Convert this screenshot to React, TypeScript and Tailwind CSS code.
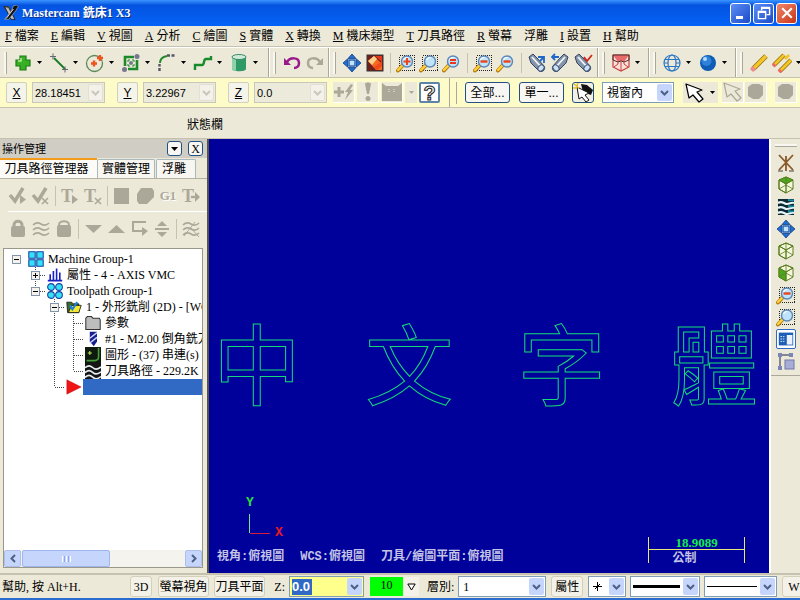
import type { ReactNode } from "react";
import clsx from "clsx";

const GRAY = "#aca899";

function Icon({ children, size = "w-5 h-5" }: { children: ReactNode; size?: string }) {
  return (
    <svg viewBox="0 0 20 20" className={clsx(size, "shrink-0")} fill="none" aria-hidden="true">
      {children}
    </svg>
  );
}

function Tool({ label, children }: { label: string; children: ReactNode }) {
  return (
    <button aria-label={label} className="w-5 h-5 shrink-0 flex items-center justify-center">
      <Icon>{children}</Icon>
    </button>
  );
}

function Caret({ label }: { label: string }) {
  return (
    <button aria-label={label} className="w-3 h-5 shrink-0 flex items-center justify-center">
      <svg viewBox="0 0 5 3" className="w-[5px] h-[3px]">
        <path d="M0 0h5L2.5 3z" fill="#000" />
      </svg>
    </button>
  );
}

function DropTool({ label, children }: { label: string; children: ReactNode }) {
  return (
    <div className="flex shrink-0 mr-px">
      <Tool label={label}>{children}</Tool>
      <Caret label={`${label} options`} />
    </div>
  );
}

function Section({ children, className }: { children: ReactNode; className?: string }) {
  return (
    <div className={clsx("flex items-center gap-[3px] pl-1 shrink-0 border-r border-[#aca899] shadow-[1px_0_0_#fff]", className)}>
      <div className="w-[3px] h-[22px] mr-[3px] shrink-0 border-r border-[#aca899] bg-[#f8f7f1]" />
      {children}
    </div>
  );
}

function Divider({ className = "w-[5px]" }: { className?: string }) {
  return (
    <div className={clsx("h-5 flex justify-center shrink-0", className)}>
      <div className="w-px h-full bg-[#c5c2b0]" />
    </div>
  );
}

function Chevron({ muted = false }: { muted?: boolean }) {
  return (
    <svg viewBox="0 0 9 6" className="w-[9px] h-[6px]" fill="none">
      <path d="M1 1l3.5 3.5L8 1" stroke={muted ? "#c9c7ba" : "#4d6185"} strokeWidth="2" />
    </svg>
  );
}

function ArrowBox({ muted = false }: { muted?: boolean }) {
  return (
    <span
      className={clsx(
        "w-[15px] flex items-center justify-center rounded-xs pointer-events-none shrink-0",
        muted ? "bg-[#f3f1e9] border border-[#e3e0d3]" : "bg-[#c6d5fb]"
      )}
    >
      <Chevron muted={muted} />
    </span>
  );
}

function CoordField({ axis, value }: { axis: string; value: string }) {
  return (
    <div className="flex items-center shrink-0 gap-[5px] mr-3">
      <button aria-label={`Lock ${axis}`} className="w-[21px] h-[21px] rounded-xs border border-[#d2cfbb] bg-[#f5f4ea] underline leading-none">
        {axis}
      </button>
      <div className="w-[73px] h-[21px] flex border border-[#c9c7ba] bg-[#eceadb] p-px">
        <input aria-label={axis} defaultValue={value} className="w-0 grow bg-transparent pl-px text-[11px] outline-none" />
        <button aria-label={`${axis} history`} className="flex">
          <ArrowBox muted />
        </button>
      </div>
    </div>
  );
}

function Dropdown({ label, value, className, children }: { label: string; value?: string; className?: string; children?: ReactNode }) {
  return (
    <div className={clsx("relative border border-[#7f9db9] bg-white p-px shrink-0", className)}>
      <select aria-label={label} className="appearance-none w-full h-full pl-[3px] pr-4 bg-transparent outline-none">
        <option>{value}</option>
      </select>
      {children}
      <div className="absolute inset-y-px right-px flex pointer-events-none">
        <ArrowBox />
      </div>
    </div>
  );
}

/* ---------- drawing pieces shared between toolbars ---------- */

function Magnifier({ mark, box = false }: { mark?: "plus" | "minus" | "equal"; box?: boolean }) {
  return (
    <>
      {box && <rect x="3.5" y="2.5" width="15" height="15" stroke="#222" strokeDasharray="1 1" shapeRendering="crispEdges" />}
      <path d="M7 12L2 17.5" stroke="#b57a10" strokeWidth="4" strokeLinecap="round" />
      <path d="M7 12L2 17" stroke="#ffd23c" strokeWidth="2.4" strokeLinecap="round" />
      <circle cx="11" cy="8.500" r="5.500" fill="#bfe3fb" stroke="#5b87b8" strokeWidth="1.4" />
      <path d="M7.500 7a4 4 0 0 1 4-2.500" stroke="#fff" strokeWidth="1.2" />
      {mark === "plus" && <path d="M11 5v7M7.500 8.500h7" stroke="#e8451c" strokeWidth="2" />}
      {mark === "minus" && <path d="M7.500 8.500h7" stroke="#e8451c" strokeWidth="2.4" />}
      {mark === "equal" && <path d="M8 7h6M8 10h6" stroke="#e8351c" strokeWidth="1.8" />}
    </>
  );
}

function FitArrows() {
  return (
    <>
      <path d="M10 1l4 4.500H6zM10 19l4-4.500H6zM1 10l4.500-4v8zM19 10l-4.500-4v8z" fill="#1f6fd0" stroke="#123f8c" strokeWidth=".8" />
      <rect x="7" y="7" width="6" height="6" fill="#c4e4fc" stroke="#1c5cb5" strokeWidth="1.400" />
    </>
  );
}

function Flashlight({ color, mark }: { color: string; mark: string }) {
  return (
    <>
      <path d="M2 4l4-3 4 4 7 8c2 3-1 7-5 5L4 10z" fill="#8494aa" stroke="#36455d" />
      <path d="M5 4l9 10" stroke="#f2f6fb" strokeWidth="1.800" />
      <ellipse cx="14" cy="15" rx="3.400" ry="2.600" transform="rotate(-45 14 15)" fill="#cfe2f5" stroke="#3c5478" />
      <path d={mark} stroke={color} strokeWidth="1.800" />
    </>
  );
}

function WireCube({ top = "none", left = "none" }: { top?: string; left?: string }) {
  return (
    <g stroke="#5a7d1e" strokeLinejoin="round">
      <path d="M10 2l7 3v9l-7 4-7-4V5z" fill="#f3f6dc" />
      <path d="M10 2l7 3-7 4-7-4z" fill={top} />
      <path d="M3 5l7 4v9l-7-4z" fill={left} />
      <path d="M10 9v9M10 9l7-4M10 2v7M3 14l7-4 7 4" strokeWidth=".8" />
    </g>
  );
}

function Waves() {
  return (
    <path
      d="M2 6c3-3 5-3 8-1s5 2 8-1M2 11c3-3 5-3 8-1s5 2 8-1M2 16c3-3 5-3 8-1s5 2 8-1"
      stroke={GRAY}
      strokeWidth="1.600"
    />
  );
}

function Pointer({ fill = "#fff", stroke = "#000" }: { fill?: string; stroke?: string }) {
  return <path d="M1 1l3 14 4-3 6 7 4-3-6-7 5-2z" fill={fill} stroke={stroke} strokeWidth="1.200" strokeLinejoin="round" />;
}

function Blob() {
  return <path d="M2 5l4-3h7l4 2v9l-4 4H7l-5-3z" fill={GRAY} />;
}

function LetterT() {
  return (
    <text x="1" y="16" fontSize="18" fontWeight="bold" fill={GRAY} fontFamily="Liberation Serif, serif">T</text>
  );
}

/* ---------- window parts ---------- */

function TitleBar() {
  return (
    <header className="h-[26px] shrink-0 flex items-center px-[3px] bg-linear-to-b from-[#3b93ff] via-[#0453e0] via-20% to-[#0463f7]">
      <Icon size="w-4 h-4">
        <path d="M1 2h6l3 5-3 3z" fill="#d9d9d9" stroke="#222" />
        <path d="M2 2l5 1 8 15h-5z" fill="#bcbcbc" stroke="#111" />
        <path d="M13 1l4-1 2 2-3 5-9 11H2l9-11z" fill="#111" stroke="#ddd" strokeWidth=".6" />
        <path d="M4 17l9-12" stroke="#fff" />
      </Icon>
      <h1 className="ml-[3px] font-bold text-white grow [text-shadow:1px_1px_0_#0a2f8c]">Mastercam 銑床1 X3</h1>
      <div className="flex gap-[2px]">
        <button aria-label="Minimize" className="w-[21px] h-[21px] rounded-[3px] border border-white bg-linear-to-br from-[#5c8df5] to-[#1c49c9] flex items-end p-1">
          <span className="w-[7px] h-[3px] bg-white ml-px" />
        </button>
        <button aria-label="Restore" className="w-[21px] h-[21px] rounded-[3px] border border-white bg-linear-to-br from-[#5c8df5] to-[#1c49c9] flex items-center justify-center">
          <Icon size="w-4 h-4">
            <path d="M7 7V3h10v9h-4M7 4h10" stroke="#fff" strokeWidth="1.800" />
            <path d="M3 8h9v9H3zM3 9h9" stroke="#fff" strokeWidth="1.800" />
          </Icon>
        </button>
        <button aria-label="Close" className="w-[21px] h-[21px] rounded-[3px] border border-white bg-linear-to-br from-[#ee8667] to-[#c9300c] flex items-center justify-center">
          <Icon size="w-4 h-4">
            <path d="M4 4l12 12M16 4L4 16" stroke="#fff" strokeWidth="2.600" />
          </Icon>
        </button>
      </div>
    </header>
  );
}

const menus = [
  ["F", "檔案"], ["E", "編輯"], ["V", "視圖"], ["A", "分析"], ["C", "繪圖"], ["S", "實體"], ["X", "轉換"],
  ["M", "機床類型"], ["T", "刀具路徑"], ["R", "螢幕"], ["", "浮雕"], ["I", "設置"], ["H", "幫助"],
];

function MenuBar() {
  return (
    <nav className="h-[21px] shrink-0 flex items-center gap-3 pl-[5px] border-b border-[#c5c2b0] overflow-hidden">
      {menus.map(([key, text]) => (
        <button key={text} className="flex gap-[3px] shrink-0 whitespace-nowrap">
          {key && <span className="underline">{key}</span>}
          <span>{text}</span>
        </button>
      ))}
    </nav>
  );
}

function MainToolbar() {
  return (
    <div className="h-[31px] shrink-0 flex border-b border-[#c5c2b0] border-t border-t-white overflow-hidden">
      <Section className="w-[269px]">
        <DropTool label="Point">
          <path d="M7 3h6v4h4v6h-4v4H7v-4H3V7h4z" fill="#37b024" stroke="#207c17" strokeWidth="1.200" />
          <path d="M8 5v3H5" stroke="#b6ec9a" strokeWidth="1.500" />
        </DropTool>
        <DropTool label="Line">
          <path d="M5 5l11 11" stroke="#177a24" strokeWidth="1.800" />
          <path d="M1 3.500h6M4 .5v6M13 16.500h6M16 13.500v6" stroke="#667" />
        </DropTool>
        <DropTool label="Arc">
          <circle cx="9.500" cy="10.500" r="8" stroke="#5b8a5b" strokeWidth="1.300" />
          <path d="M9 7.500v6M6 10.500h6M15 2v6M12 5h6" stroke="#f0531c" strokeWidth="2.400" />
        </DropTool>
        <DropTool label="Rectangle">
          <path d="M13 4H4v9M7 16h9V7" stroke="#1c8a2b" strokeWidth="2.600" />
          <path d="M7 9V7h2M11 7h2v2M13 11v2h-2M9 13H7v-2" stroke="#1c8a2b" />
          <circle cx="10" cy="10" r="2" fill="#777790" />
          <circle cx="16" cy="3.500" r="2.500" fill="#777790" />
          <circle cx="3.500" cy="16.500" r="2.500" fill="#777790" />
        </DropTool>
        <DropTool label="Fillet">
          <path d="M2.500 18V11" stroke="#556" strokeWidth="2.400" strokeDasharray="3 1.500" />
          <path d="M3 10c0-4 2-6 7-7" stroke="#1c8a2b" strokeWidth="2" />
          <path d="M10 2.500h8" stroke="#556" strokeWidth="2.400" strokeDasharray="3 1.500" />
        </DropTool>
        <DropTool label="Spline">
          <path d="M2 17v-5h7c3 0 1-6 4-6h5V3" stroke="#178a2a" strokeWidth="2.400" />
        </DropTool>
        <DropTool label="Cylinder">
          <path d="M3 4v12c0 3 14 3 14 0V4z" fill="#2f9a66" />
          <path d="M3 4v12c0 1 2 2 4 2V5z" fill="#8fd0ae" />
          <ellipse cx="10" cy="4" rx="7" ry="2.500" fill="#cfe9da" stroke="#3a8c64" />
        </DropTool>
      </Section>
      <Section className="w-[60px]">
        <Tool label="Undo">
          <path d="M5 9c3-5 12-5 12 1 0 3-2 5-5 5" stroke="#9a1a8e" strokeWidth="2.500" />
          <path d="M2 5v7h7z" fill="#9a1a8e" />
        </Tool>
        <Tool label="Redo">
          <path d="M15 9C12 4 3 4 3 10c0 3 2 5 5 5" stroke={GRAY} strokeWidth="2.500" />
          <path d="M18 5v7h-7z" fill={GRAY} />
        </Tool>
      </Section>
      <Section className="w-[269px]">
        <Tool label="Fit">
          <FitArrows />
        </Tool>
        <Tool label="Repaint">
          <rect x="2" y="2" width="16" height="16" fill="#70201c" stroke="#333" />
          <path d="M10 3h7v6z" fill="#e03a1c" />
          <path d="M3 8l6-5 8 8v6h-6z" fill="#f56a20" />
          <path d="M3 8l6-5 3 3-5 6z" fill="#ffd08a" />
          <path d="M9 14l8-6v5l-5 4z" fill="#f0481c" />
        </Tool>
        <Divider />
        <Tool label="Zoom window"><Magnifier mark="plus" box /></Tool>
        <Tool label="Zoom target"><Magnifier box /></Tool>
        <Tool label="Zoom selected"><Magnifier mark="equal" /></Tool>
        <Divider />
        <Tool label="Zoom previous"><Magnifier mark="minus" box /></Tool>
        <Tool label="Zoom out"><Magnifier mark="minus" /></Tool>
        <Divider />
        <Tool label="Dynamic spin"><Flashlight color="#1f66c9" mark="M11 4h6v6M17 4l-4 4" /></Tool>
        <Tool label="Previous view">
          <path d="M18 4l-4-3-4 4-7 8c-2 3 1 7 5 5l8-8z" fill="#8494aa" stroke="#36455d" />
          <path d="M15 4l-9 10" stroke="#f2f6fb" strokeWidth="1.800" />
          <ellipse cx="6" cy="15" rx="3.400" ry="2.600" transform="rotate(45 6 15)" fill="#cfe2f5" stroke="#3c5478" />
          <path d="M9 4H2M5 1L2 4l3 3" stroke="#1f66c9" strokeWidth="1.800" />
        </Tool>
        <Tool label="Named view"><Flashlight color="#d3261c" mark="M11 4l3 4 5-6" /></Tool>
      </Section>
      <Section className="w-[51px]">
        <DropTool label="Graphics view">
          <path d="M2 2h16v12l-8 4-8-4z" fill="#fbe0da" stroke="#c8403c" strokeWidth="1.200" />
          <path d="M2 2h16l-5 7-3-1-3 1z" fill="#e86a6a" />
          <path d="M2 2h16v5l-5 2-3-1-3 1-5-2z" stroke="#4a3030" />
          <path d="M10 9v9M3 14l4-3v-2M17 14l-4-3v-2" stroke="#c8403c" />
        </DropTool>
      </Section>
      <Section className="w-[87px]">
        <DropTool label="Wireframe">
          <g stroke="#2a76c4" strokeWidth="1.200">
            <circle cx="10" cy="10" r="8" />
            <ellipse cx="10" cy="10" rx="4" ry="8" />
            <path d="M2 10h4M14 10h4M3 6.500h14M3 13.500h14" />
          </g>
        </DropTool>
        <DropTool label="Shaded">
          <circle cx="10" cy="10" r="8" fill="#0f5cb4" />
          <circle cx="8.500" cy="8" r="5" fill="#2f82d8" />
          <circle cx="7" cy="6" r="2" fill="#b4dcfb" />
        </DropTool>
      </Section>
      <Section className="w-[90px] border-r-0">
        <Tool label="Delete">
          <path d="M4 16L17 3" stroke="#947012" strokeWidth="5" />
          <path d="M5 15L17 3" stroke="#f5c526" strokeWidth="3.400" />
          <path d="M2.500 17.500l3-3" stroke="#ee8c8c" strokeWidth="4.500" />
        </Tool>
        <DropTool label="Delete duplicates">
          <path d="M2 12L12 2M8 18L19 7" stroke="#947012" strokeWidth="4.400" />
          <path d="M2 12L12 2M8 18L19 7M13 6l4-4" stroke="#f5c526" strokeWidth="2.800" />
          <path d="M1 13l2-2M7 19l2-2" stroke="#e66" strokeWidth="4" />
        </DropTool>
      </Section>
    </div>
  );
}

function FlatButton({ label, children }: { label: string; children: ReactNode }) {
  return (
    <button aria-label={label} className="w-[22px] h-[21px] shrink-0 bg-[#ece9d8] border-r border-b border-white flex items-center justify-center">
      <Icon>{children}</Icon>
    </button>
  );
}

function RibbonBar() {
  return (
    <div className="h-[30px] shrink-0 flex items-center bg-[#fdfcc9] border-b border-[#c5c2b0] overflow-hidden font-['Liberation_Sans','Noto_Sans_CJK_TC',sans-serif]">
      <div className="w-[450px] h-full pl-[6px] shrink-0 flex items-center border-r border-[#aca899]">
        <CoordField axis="X" value="28.18451" />
        <CoordField axis="Y" value="3.22967" />
        <CoordField axis="Z" value="0.0" />
        <div className="flex gap-[2px] -ml-[6px]">
          <FlatButton label="Fast point">
            <path d="M5 5v10M0 10h10" stroke={GRAY} strokeWidth="3" />
            <path d="M17 2l-6 8h3l-3 8 8-10h-3l3-5z" fill={GRAY} />
          </FlatButton>
          <FlatButton label="AutoCursor override">
            <path d="M7 2c0-2 6-2 6 0l-2 10H9z" fill={GRAY} />
            <circle cx="10" cy="16.500" r="2.500" fill={GRAY} />
          </FlatButton>
          <FlatButton label="AutoCursor settings">
            <path d="M0 1l4 3h12l4-3v18H0z" fill={GRAY} />
            <path d="M7 7v3M12 7v3" stroke="#ece9d8" strokeDasharray="1 1" />
          </FlatButton>
          <button aria-label="AutoCursor list" className="w-3 h-[21px] bg-[#ece9d8] flex items-center justify-center">
            <svg viewBox="0 0 5 3" className="w-[5px] h-[3px]"><path d="M0 0h5L2.500 3z" fill={GRAY} /></svg>
          </button>
          <button className="w-[21px] h-[21px] rounded-xs border-2 border-[#5f82a8] bg-white text-[20px] leading-none font-bold text-[#e9e9e9] [-webkit-text-stroke:1px_#222] flex items-center justify-center">?</button>
        </div>
      </div>
      <div className="w-[3px] h-[22px] ml-1 mr-2 shrink-0 border-r border-[#aca899]" />
      <button className="w-[45px] h-[21px] shrink-0 rounded-[3px] border border-[#24507f] bg-[#f7f6f2]">全部...</button>
      <button className="w-[45px] h-[21px] ml-[9px] shrink-0 rounded-[3px] border border-[#24507f] bg-[#f7f6f2]">單一...</button>
      <button aria-label="Select last" className="w-[22px] h-[21px] ml-2 shrink-0 rounded-[3px] border border-[#24507f] bg-[#f2f0e6] flex items-center justify-center">
        <Icon>
          <path d="M8 1l6 1 6 5-2 5-8-3z" fill="#111" />
          <path d="M4 4l2 12 3-2 4 5 3-2-4-5 4-2z" fill="#fff" stroke="#111" />
          <path d="M1 1l5 4M5 0L3 5M0 5h4" stroke="#e8c020" strokeWidth="1.500" />
        </Icon>
      </button>
      <Dropdown label="Window selection" value="視窗內" className="w-[72px] h-[21px] ml-2" />
      <div className="flex ml-[9px] bg-[#ece9d8] shrink-0">
        <button aria-label="Select entities" className="w-[23px] h-[21px] flex items-center justify-center">
          <Icon><Pointer /></Icon>
        </button>
        <Caret label="Selection mode" />
      </div>
      <div className="flex gap-px ml-1 shrink-0">
        <FlatButton label="Verify selection"><Pointer fill="#ece9d8" stroke={GRAY} /></FlatButton>
        <FlatButton label="Solid face"><Blob /></FlatButton>
        <div className="ml-[7px]"><FlatButton label="Solid body"><Blob /></FlatButton></div>
      </div>
    </div>
  );
}

function OperationsToolbar() {
  return (
    <div className="pt-[2px] pl-2 overflow-hidden">
      <div className="h-[31px] flex items-center gap-[3px] border-b border-white">
        <Tool label="Select all">
          <path d="M2 9l5 6 8-13" stroke={GRAY} strokeWidth="3.500" />
          <path d="M12 9v9l6-4.500z" fill={GRAY} />
        </Tool>
        <Tool label="Select dirty">
          <path d="M2 9l5 6 8-13" stroke={GRAY} strokeWidth="3.500" />
          <path d="M11 12l6 6M17 12l-6 6" stroke={GRAY} strokeWidth="1.600" />
        </Tool>
        <Divider className="w-[3px]" />
        <Tool label="Regenerate all"><LetterT /><path d="M12 9v9l6-4.500z" fill={GRAY} /></Tool>
        <Tool label="Regenerate dirty"><LetterT /><path d="M12 12l6 6M18 12l-6 6" stroke={GRAY} strokeWidth="1.600" /></Tool>
        <Divider className="w-[3px]" />
        <Tool label="Backplot"><rect x="2" y="2" width="15" height="16" fill={GRAY} /></Tool>
        <Tool label="Verify"><path d="M6 2h11l2 3v6l-7 7H4l-2-3V8z" fill={GRAY} /></Tool>
        <button className="w-5 h-5 shrink-0 font-bold text-[13px] leading-5 text-[#aca899] [text-shadow:1px_1px_0_#fff]">G1</button>
        <Tool label="High feed"><LetterT /><path d="M10 11h5" stroke={GRAY} strokeWidth="2.400" /><path d="M14 6l5 5-5 5z" fill={GRAY} /></Tool>
      </div>
      <div className="h-[33px] flex items-center gap-[3px]">
        <Tool label="Lock">
          <path d="M6 8V6c0-5 8-5 8 0v2" stroke={GRAY} strokeWidth="3" />
          <rect x="3" y="7" width="14" height="11" rx="2" fill={GRAY} />
        </Tool>
        <Tool label="Toggle display"><Waves /></Tool>
        <Tool label="Toggle posting">
          <path d="M5 8V6c0-5 10-5 10 0v2" stroke={GRAY} strokeWidth="2" />
          <rect x="3" y="6" width="14" height="12" rx="2" fill={GRAY} />
        </Tool>
        <Divider className="w-[3px]" />
        <Tool label="Move down"><path d="M2 6h17l-8.500 8z" fill={GRAY} /></Tool>
        <Tool label="Move up"><path d="M2 14h17l-8.500-8z" fill={GRAY} /></Tool>
        <Tool label="Insert arrow">
          <path d="M17 3H4v9h10" stroke={GRAY} strokeWidth="2" />
          <path d="M13 8l6 4-6 5z" fill={GRAY} />
        </Tool>
        <Tool label="Scroll to arrow">
          <path d="M10 2l5 5H5zM10 18l5-5H5z" fill={GRAY} />
          <path d="M3 10h14" stroke={GRAY} strokeWidth="2" />
        </Tool>
        <Divider className="w-[3px]" />
        <Tool label="Display selected"><Waves /><path d="M10 9l8 9M3 17L14 3" stroke={GRAY} /></Tool>
      </div>
    </div>
  );
}

type Cell = "blank" | "v" | "tee" | "end" | "open" | "openTop" | "openDown" | "closed";

const lines: Record<Cell, string> = {
  blank: "",
  v: "M9.500 0v16",
  tee: "M9.500 0v16M9.500 8.500h10",
  end: "M9.500 0v8M9.500 8.500h10",
  open: "",
  openTop: "M9.500 0v4M14 8.500h5",
  openDown: "M9.500 0v16M14 8.500h5",
  closed: "M9.500 0v16M14 8.500h5",
};

function TreeCell({ kind }: { kind: Cell }) {
  const expander = kind.startsWith("open") || kind === "closed";
  return (
    <svg viewBox="0 0 19 16" className="w-[19px] h-4 shrink-0" fill="none" shapeRendering="crispEdges" aria-hidden="true">
      <path d={lines[kind]} stroke="#444" strokeDasharray="1 1" />
      {expander && (
        <>
          <rect x="5.500" y="4.500" width="8" height="8" fill="#f4f2ea" stroke="#8294aa" />
          <path d={kind === "closed" ? "M7 8.500h5M9.500 6v5" : "M7 8.500h5"} stroke="#000" />
        </>
      )}
    </svg>
  );
}

const treeIcons = {
  machine: <path d="M1 1h8v8H1zM11 1h8v8h-8zM1 11h8v8H1zM11 11h8v8h-8z" fill="#35e0f8" stroke="#1440a0" strokeWidth="1.300" />,
  props: <path d="M1 17h18M4 9v8M8 5v12M12 2v15M16 7v10" stroke="#1a1fc0" strokeWidth="2" />,
  toolpath: (
    <g fill="#35e0f8" stroke="#1440a0" strokeWidth="1.300">
      <circle cx="5" cy="5" r="4.200" />
      <circle cx="15" cy="5" r="4.200" />
      <circle cx="5" cy="15" r="4.200" />
      <circle cx="15" cy="15" r="4.200" />
    </g>
  ),
  folderOpen: (
    <>
      <path d="M1 4h6l2 2h7v11H2z" fill="#3b6b2a" stroke="#111" />
      <path d="M3 17l4-9h12l-3 9z" fill="#f4e832" stroke="#111" />
      <path d="M5 8l3 5 6-9" stroke="#1f84d8" strokeWidth="2.600" />
    </>
  ),
  folder: <path d="M1 18V4l2-2h5l2 2h8l1 2v12z" fill="#bdbdbd" stroke="#333" strokeWidth="1.300" />,
  tool: (
    <>
      <path d="M6 1h9v12l-4 6-5-6z" fill="#16208c" />
      <path d="M6 9l9-7M6 15l9-7" stroke="#cdd4ff" strokeWidth="1.800" />
    </>
  ),
  geometry: (
    <>
      <rect width="20" height="20" fill="#0d1a0d" />
      <path d="M17 1v11c0 3-2 5-5 5H2" stroke="#4a9c3c" strokeWidth="2" />
      <path d="M6 5v5M3.500 7.500h5" stroke="#c8f060" strokeWidth="1.200" />
    </>
  ),
  nci: (
    <>
      <rect width="20" height="20" fill="#151515" />
      <path d="M0 6c4-4 7-3 10 0s6 2 10-1M0 12c4-4 7-3 10 0s6 2 10-1M0 18c4-4 7-3 10 0s6 2 10-1" stroke="#e6eef0" strokeWidth="2" />
    </>
  ),
  arrow: <path d="M1 1v18l18-9z" fill="#f01414" stroke="#a00" strokeWidth=".5" />,
};

const tree: { cells: Cell[]; icon: keyof typeof treeIcons; text: string }[] = [
  { cells: ["open"], icon: "machine", text: "Machine Group-1" },
  { cells: ["blank", "closed"], icon: "props", text: "屬性 - 4 - AXIS VMC" },
  { cells: ["blank", "openTop"], icon: "toolpath", text: "Toolpath Group-1" },
  { cells: ["blank", "blank", "openDown"], icon: "folderOpen", text: "1 - 外形銑削 (2D) - [WC" },
  { cells: ["blank", "blank", "v", "tee"], icon: "folder", text: "參數" },
  { cells: ["blank", "blank", "v", "tee"], icon: "tool", text: "#1 - M2.00 倒角銑刀" },
  { cells: ["blank", "blank", "v", "tee"], icon: "geometry", text: "圖形 - (37) 串連(s)" },
  { cells: ["blank", "blank", "v", "end"], icon: "nci", text: "刀具路徑 - 229.2K" },
  { cells: ["blank", "blank", "end"], icon: "arrow", text: "" },
];

function OperationsPanel() {
  return (
    <aside className="w-[209px] shrink-0 flex flex-col border-r-2 border-[#55554c] pb-[5px]">
      <div className="h-[19px] shrink-0 flex items-center bg-[#d0cdc5] pl-[2px] pr-1">
        <h2 className="text-[11px] grow">操作管理</h2>
        <button aria-label="Panel menu" className="w-[15px] h-[15px] rounded-[3px] border border-[#24507f] bg-[#f7f6f2] flex items-center justify-center">
          <svg viewBox="0 0 7 4" className="w-[7px] h-1"><path d="M0 0h7L3.500 4z" fill="#000" /></svg>
        </button>
        <button aria-label="Close panel" className="w-[15px] h-[15px] ml-[6px] rounded-[3px] border border-[#24507f] bg-[#f7f6f2] text-[12px] leading-none">X</button>
      </div>
      <div role="tablist" className="h-[21px] shrink-0 flex items-end whitespace-nowrap border-b border-[#b5b2a2]">
        <button role="tab" aria-selected="true" className="w-[97px] h-full pr-1 border-t-2 border-[#f59b1c] bg-[#fcfbf8]">刀具路徑管理器</button>
        <button role="tab" aria-selected="false" className="w-[58px] h-[19px] border border-b-0 border-[#a9b8bd] rounded-t-xs bg-[#f7f6f0]">實體管理</button>
        <button role="tab" aria-selected="false" className="w-[40px] h-[19px] ml-px pr-1 border border-b-0 border-[#a9b8bd] rounded-t-xs bg-[#f7f6f0]">浮雕</button>
      </div>
      <OperationsToolbar />
      <div className="grow mt-[3px] ml-[3px] mr-1 border border-[#9a988a] bg-white flex flex-col overflow-hidden">
        <ul className="grow pl-[3px] pt-[2px]">
          {tree.map((row, i) => (
            <li key={i} className="h-4 flex items-center whitespace-nowrap overflow-hidden">
              {row.cells.map((kind, n) => (
                <TreeCell key={n} kind={kind} />
              ))}
              <span className="w-[19px] shrink-0 flex justify-center">
                <Icon size="w-4 h-4">{treeIcons[row.icon]}</Icon>
              </span>
              {row.text ? <span className="pl-[3px]">{row.text}</span> : <span className="grow h-4 bg-[#316ac5]" />}
            </li>
          ))}
        </ul>
        <div className="h-[17px] flex bg-[#f4f3ee]">
          <button aria-label="Scroll left" className="w-[17px] rounded-xs border border-[#aebfee] bg-[#c6d5fb] flex items-center justify-center">
            <svg viewBox="0 0 6 9" className="w-[6px] h-[9px]" fill="none"><path d="M5 1L1.500 4.500 5 8" stroke="#4d6185" strokeWidth="2" /></svg>
          </button>
          <div className="grow flex">
            <div className="w-[88px] ml-px rounded-xs border border-[#9fb5ee] bg-[#c6d5fb] flex items-center justify-center gap-px">
              <span className="w-px h-[6px] bg-white" />
              <span className="w-px h-[6px] bg-[#8ca8ee]" />
              <span className="w-px h-[6px] bg-white" />
              <span className="w-px h-[6px] bg-[#8ca8ee]" />
              <span className="w-px h-[6px] bg-white" />
            </div>
          </div>
          <button aria-label="Scroll right" className="w-[17px] rounded-xs border border-[#aebfee] bg-[#c6d5fb] flex items-center justify-center">
            <svg viewBox="0 0 6 9" className="w-[6px] h-[9px]" fill="none"><path d="M1 1l3.500 3.500L1 8" stroke="#4d6185" strokeWidth="2" /></svg>
          </button>
        </div>
      </div>
    </aside>
  );
}

function Viewport() {
  return (
    <main className="grow min-w-0 flex flex-col bg-[#00009b] pt-[177px] overflow-hidden">
      <div className="flex justify-between pl-1 pr-[11px] text-[88px] leading-[88px] text-transparent [-webkit-text-stroke:1px_#14d878] font-['Noto_Sans_CJK_TC',sans-serif] font-normal">
        <span>中</span>
        <span>文</span>
        <span>字</span>
        <span>體</span>
      </div>
      <div className="grow" />
      <svg viewBox="0 0 50 45" className="w-[50px] h-[45px] ml-[35px] shrink-0" fontFamily="Liberation Mono, monospace" fontWeight="bold" fontSize="13">
        <path d="M5.500 22v19" stroke="#7fe08a" />
        <path d="M6 41.500h20" stroke="#d02040" />
        <text x="2" y="14" fill="#2be03a">Y</text>
        <text x="31" y="44" fill="#f01820">X</text>
      </svg>
      <div className="h-[36px] shrink-0 flex items-start pl-2 pr-6 font-bold text-[#c4c4e4] whitespace-nowrap">
        <div className="flex gap-4 pt-3 leading-4 grow font-['Liberation_Mono','Noto_Sans_CJK_TC',monospace]">
          <span>視角:俯視圖</span>
          <span>WCS:俯視圖</span>
          <span>刀具/繪圖平面:俯視圖</span>
        </div>
        <div className="w-[97px] h-[26px] flex flex-col border-x border-[#e8e878] text-center leading-3">
          <span className="h-[13px] text-[#14ee4c] border-b border-[#e8e878] text-[13px] font-['Liberation_Serif',serif]">18.9089</span>
          <span className="pr-6 pt-[2px]">公制</span>
        </div>
      </div>
    </main>
  );
}

function ViewToolbar() {
  return (
    <div className="w-[31px] shrink-0 border-l-2 border-white flex flex-col items-center pt-[5px]">
      <div className="w-[22px] h-[3px] mb-[6px] border-b border-[#aca899] bg-[#f8f7f1]" />
      <div className="flex flex-col gap-[2px]">
        <Tool label="Axes">
          <path d="M10 3v15M3 2l14 15M17 2L3 17" stroke="#8a5a28" strokeWidth="1.800" />
          <path d="M2 18h5M13 18h5" stroke="#444" />
        </Tool>
        <Tool label="Top view"><WireCube top="#4ba81e" /></Tool>
        <Tool label="Toolpaths">
          <rect x="2" y="2" width="16" height="16" fill="#0b2a33" />
          <path d="M2 6c4-3 6 1 9 1s4-2 7-1M2 11c4-3 6 1 9 1s4-2 7-1M2 16c4-3 6 1 9 1s4-2 7-1" stroke="#e9f6f8" strokeWidth="2.200" />
          <path d="M12 3c3 0 3 1 6 0M12 9c3 0 3 1 6 0M12 14c3 0 3 1 6 0" stroke="#1a8fa0" strokeWidth="1.800" />
        </Tool>
        <Tool label="Fit screen"><FitArrows /></Tool>
        <Tool label="Isometric view"><WireCube /></Tool>
        <Tool label="Front view"><WireCube left="#4ba81e" /></Tool>
        <Tool label="Unzoom"><Magnifier mark="minus" box /></Tool>
        <Tool label="Zoom area"><Magnifier box /></Tool>
        <button aria-label="Operations manager" className="w-5 h-5 border border-[#316ac5] rounded-xs bg-white flex items-center justify-center">
          <Icon size="w-4 h-4">
            <rect x="1" y="2" width="18" height="16" fill="#1c5eb8" />
            <rect x="11" y="5" width="7" height="12" fill="#eaf3fd" />
            <path d="M3 7h6M3 10h6M3 13h6" stroke="#fff" strokeDasharray="2 1" />
          </Icon>
        </button>
        <Tool label="Planes">
          <path d="M4 16V4h10" stroke="#667" strokeWidth="1.500" />
          <path d="M2 2h4v4H2zM13 2h4v4h-4zM2 15h4v4H2z" fill="#7a86b8" />
          <rect x="9" y="9" width="9" height="9" fill="#a7add6" stroke="#7078a8" />
        </Tool>
      </div>
      <div className="w-full h-px mt-1 bg-[#aca899]" />
    </div>
  );
}

function StatusButton({ children, className }: { children: ReactNode; className?: string }) {
  return (
    <button className={clsx("h-[21px] shrink-0 whitespace-nowrap rounded-[3px] border border-[#d2cfbb] bg-[#f4f2e8]", className)}>{children}</button>
  );
}

function StatusBar() {
  return (
    <footer className="h-[27px] shrink-0 flex items-center border-t-2 border-[#c5c2b0] border-b-2 border-b-[#2a6cd0] whitespace-nowrap overflow-hidden">
      <div className="w-[130px] shrink-0 pl-[2px]">幫助, 按 Alt+H.</div>
      <StatusButton className="w-[22px]">3D</StatusButton>
      <StatusButton className="w-[51px] ml-[6px]">螢幕視角</StatusButton>
      <StatusButton className="w-[51px] ml-[5px]">刀具平面</StatusButton>
      <label htmlFor="depth" className="w-5 ml-1 text-right pr-1 shrink-0">Z:</label>
      <div className="w-[75px] h-[21px] shrink-0 flex border border-[#7f9db9] bg-[#ffff8c] p-px">
        <div className="grow flex items-center pl-px">
          <input id="depth" defaultValue="0.0" className="w-5 h-4 bg-[#316ac5] text-white font-bold text-[13px] outline-none font-['Liberation_Sans',sans-serif]" />
        </div>
        <button aria-label="Depth history" className="flex"><ArrowBox /></button>
      </div>
      <button aria-label="Color 10" className="w-[33px] h-[19px] ml-[6px] shrink-0 bg-[#00ff00] leading-none pb-1">10</button>
      <button aria-label="Pick color" className="w-[15px] h-[19px] ml-px shrink-0 bg-[#f4f2e8] flex items-center justify-center">
        <svg viewBox="0 0 9 8" className="w-[9px] h-2"><path d="M.8 1h7.400L4.500 7z" fill="#fff" stroke="#000" /></svg>
      </button>
      <span className="ml-2 mr-1 shrink-0">層別:</span>
      <Dropdown label="層別" value="1" className="w-[88px] h-[21px]" />
      <StatusButton className="w-8 ml-[5px]">屬性</StatusButton>
      <Dropdown label="Point style" className="w-[38px] h-[21px] ml-[5px]">
        <div className="absolute inset-y-0 left-1 flex items-center pointer-events-none">
          <svg viewBox="0 0 9 9" className="w-[9px] h-[9px]"><path d="M0 4.500h9M4.500 0v9M2 7l5-5" stroke="#000" /></svg>
        </div>
      </Dropdown>
      <Dropdown label="Line style" className="w-[70px] h-[21px] ml-1">
        <div className="absolute inset-y-0 left-[2px] right-[19px] flex items-center pointer-events-none"><span className="grow h-[3px] bg-black" /></div>
      </Dropdown>
      <Dropdown label="Line width" className="w-[73px] h-[21px] ml-1">
        <div className="absolute inset-y-0 left-[2px] right-[19px] flex items-center pointer-events-none"><span className="grow h-px bg-black" /></div>
      </Dropdown>
      <StatusButton className="w-10 ml-[5px] pl-[5px] text-left">WCS</StatusButton>
    </footer>
  );
}

export default function App() {
  return (
    <div className="min-h-screen flex flex-col bg-[#ece9d8] text-black text-[12px] leading-4 overflow-hidden font-['Liberation_Serif','Noto_Sans_CJK_TC',serif]">
      <TitleBar />
      <MenuBar />
      <MainToolbar />
      <RibbonBar />
      <div className="h-[31px] shrink-0 flex items-center pl-[187px] pt-[3px] border-b border-[#c5c2b0]">狀態欄</div>
      <div className="grow flex min-h-0">
        <OperationsPanel />
        <Viewport />
        <ViewToolbar />
      </div>
      <StatusBar />
    </div>
  );
}
